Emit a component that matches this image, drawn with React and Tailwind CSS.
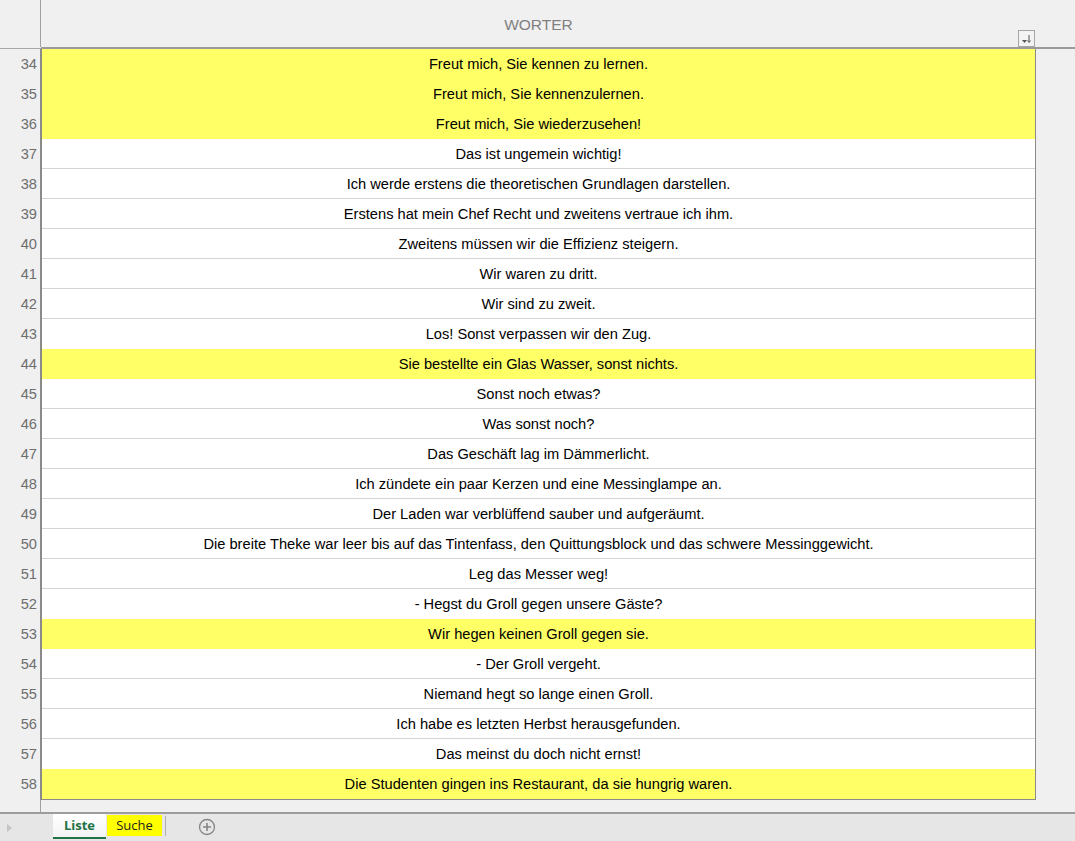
import React from 'react';

const rows = [
  { n: 34, text: 'Freut mich, Sie kennen zu lernen.', hl: true },
  { n: 35, text: 'Freut mich, Sie kennenzulernen.', hl: true },
  { n: 36, text: 'Freut mich, Sie wiederzusehen!', hl: true },
  { n: 37, text: 'Das ist ungemein wichtig!' },
  { n: 38, text: 'Ich werde erstens die theoretischen Grundlagen darstellen.' },
  { n: 39, text: 'Erstens hat mein Chef Recht und zweitens vertraue ich ihm.' },
  { n: 40, text: 'Zweitens müssen wir die Effizienz steigern.' },
  { n: 41, text: 'Wir waren zu dritt.' },
  { n: 42, text: 'Wir sind zu zweit.' },
  { n: 43, text: 'Los! Sonst verpassen wir den Zug.' },
  { n: 44, text: 'Sie bestellte ein Glas Wasser, sonst nichts.', hl: true },
  { n: 45, text: 'Sonst noch etwas?' },
  { n: 46, text: 'Was sonst noch?' },
  { n: 47, text: 'Das Geschäft lag im Dämmerlicht.' },
  { n: 48, text: 'Ich zündete ein paar Kerzen und eine Messinglampe an.' },
  { n: 49, text: 'Der Laden war verblüffend sauber und aufgeräumt.' },
  { n: 50, text: 'Die breite Theke war leer bis auf das Tintenfass, den Quittungsblock und das schwere Messinggewicht.' },
  { n: 51, text: 'Leg das Messer weg!' },
  { n: 52, text: '- Hegst du Groll gegen unsere Gäste?' },
  { n: 53, text: 'Wir hegen keinen Groll gegen sie.', hl: true },
  { n: 54, text: '- Der Groll vergeht.' },
  { n: 55, text: 'Niemand hegt so lange einen Groll.' },
  { n: 56, text: 'Ich habe es letzten Herbst herausgefunden.' },
  { n: 57, text: 'Das meinst du doch nicht ernst!' },
  { n: 58, text: 'Die Studenten gingen ins Restaurant, da sie hungrig waren.', hl: true },
];

// little filter/sort button in the header cell
const FilterButton = () => (
  <div className="w-[17px] h-[17px] border border-[#a6a6a6] bg-[#f3f3f3] flex items-center justify-center">
    <svg width="11" height="10" viewBox="0 0 11 10">
      <path d="M1 6 L6 6 L3.5 9 Z" fill="#555" />
      <path d="M8 1 V8" stroke="#555" strokeWidth="1" />
      <path d="M6.5 6.5 L8 8.5 L9.5 6.5" stroke="#555" strokeWidth="1" fill="none" />
    </svg>
  </div>
);

const App = () => {
  return (
    <div
      className="w-[1075px] h-[841px] bg-[#f0f0f0] flex flex-col overflow-hidden"
      style={{ fontFamily: '"Liberation Sans", Arial, sans-serif' }}
    >
      {/* header */}
      <div className="flex h-[47px] shrink-0">
        <div className="w-[41px] border-r border-[#a0a0a0]" />
        <div className="w-[995px] relative flex items-center justify-center">
          <span className="text-[15.5px] text-[#808080] mt-[3px]">WORTER</span>
          <div className="absolute right-[1px] bottom-0">
            <FilterButton />
          </div>
        </div>
        <div className="flex-1" />
      </div>
      <div className="flex h-[2px] shrink-0">
        <div className="w-[41px] h-[1px] mt-[1px] bg-[#a6a6a6]" />
        <div className="flex-1 bg-[#9a9a9a]" />
      </div>

      {/* body */}
      <div className="flex shrink-0">
        <div className="w-[40px] flex flex-col">
          {rows.map((r) => (
            <div key={r.n} className="h-[30px] flex items-center justify-end pr-[3px] text-[14.67px] text-[#6e6e6e]">
              {r.n}
            </div>
          ))}
        </div>
        <div className="w-[996px] border-l-2 border-r border-b border-[#8a8a8a] flex flex-col">
          {rows.map((r, i) => {
            const next = rows[i + 1];
            const line = !r.hl && next && !next.hl;
            return (
              <div
                key={r.n}
                className={`h-[30px] flex items-center justify-center text-[14.67px] text-black ${
                  r.hl ? 'bg-[#ffff66]' : 'bg-white'
                } ${line ? 'border-b border-[#d4d4d4]' : ''}`}
              >
                {r.text}
              </div>
            );
          })}
        </div>
        <div className="flex-1" />
      </div>

      {/* space under the table */}
      <div className="flex flex-1">
        <div className="w-[41px] border-r border-[#a0a0a0]" />
      </div>

      {/* sheet tabs */}
      <div className="h-[29px] shrink-0 border-t-2 border-[#9c9c9c] bg-[#e6e6e6] flex items-start">
        <div className="w-[53px] h-full flex items-center pl-[7px]">
          <svg width="5" height="8" viewBox="0 0 5 8">
            <path d="M0 0 L5 4 L0 8 Z" fill="#c4c4c4" />
          </svg>
        </div>
        <div className="w-[53px] h-[25px] bg-gradient-to-b from-white to-[#f4f4f4] border-b-2 border-[#217346] flex items-center justify-center">
          <span className="text-[13px] font-bold text-[#217346]" style={{ fontFamily: '"Open Sans", "Liberation Sans", sans-serif' }}>Liste</span>
        </div>
        <div className="w-[55px] h-[21px] mt-[1px] ml-[1px] bg-[#ffff00] flex items-center justify-center">
          <span className="text-[13px] text-[#222]" style={{ fontFamily: '"Open Sans", "Liberation Sans", sans-serif' }}>Suche</span>
        </div>
        <div className="w-[1px] h-[20px] mt-[2px] ml-[3px] bg-[#b0b0b0]" />
        <div className="ml-[32px] h-[25px] flex items-center">
          <svg width="18" height="18" viewBox="0 0 18 18">
            <circle cx="9" cy="9" r="7.5" fill="none" stroke="#858585" strokeWidth="1.3" />
            <path d="M9 5 V13 M5 9 H13" stroke="#858585" strokeWidth="1.6" />
          </svg>
        </div>
      </div>
    </div>
  );
};

export default App;
